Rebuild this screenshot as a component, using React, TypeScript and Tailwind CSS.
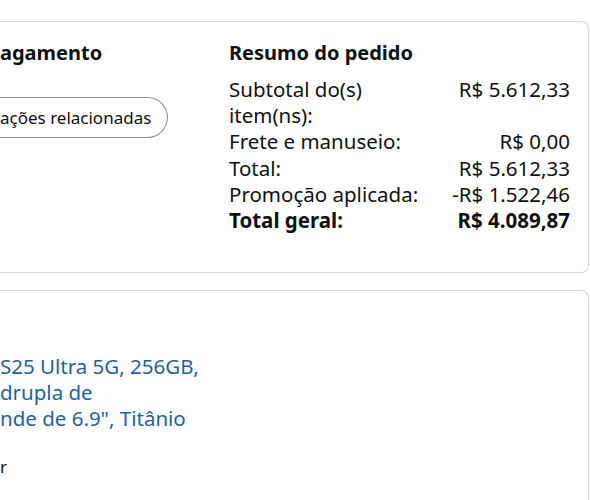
export default function App() {
  return (
    <div className="w-[590px] h-[500px] overflow-hidden bg-white font-['Noto_Sans',sans-serif] text-[#0f1111]">
      <div className="mr-[1px] pt-[21px]">
        {/* resumo / pagamento */}
        <section className="flex h-[252px] rounded-r-lg border-y border-r border-[#d5d9d9] pt-[18px]">
          <div className="w-[229px] shrink-0">
            <h2 className="text-[20px] font-bold leading-[26px]">agamento</h2>
            <button className="mt-[31px] h-[41px] rounded-r-full border-y border-r border-[#888c8c] pr-[16px] text-[17px] leading-[24px] whitespace-nowrap">
              ações relacionadas
            </button>
          </div>
          <div className="flex-1 pr-[18px]">
            <h2 className="text-[20px] font-bold leading-[26px]">
              Resumo do pedido
            </h2>
            <div className="mt-[10px] grid grid-cols-[1fr_auto] text-[20.5px] leading-[26.2px]">
              <span>
                Subtotal do(s)
                <br />
                item(ns):
              </span>
              <span className="text-right">R$ 5.612,33</span>
              <span>Frete e manuseio:</span>
              <span className="text-right">R$ 0,00</span>
              <span>Total:</span>
              <span className="text-right">R$ 5.612,33</span>
              <span>Promoção aplicada:</span>
              <span className="text-right">-R$ 1.522,46</span>
              <span className="font-bold">Total geral:</span>
              <span className="text-right font-bold">R$ 4.089,87</span>
            </div>
          </div>
        </section>

        {/* item do pedido */}
        <section className="mt-[17px] h-[300px] rounded-r-lg border-y border-r border-[#d5d9d9] pt-[62px]">
          <div className="text-[20.5px] leading-[26px] text-[#2162a1]">
            <div>S25 Ultra 5G, 256GB,</div>
            <div>drupla de</div>
            <div>nde de 6.9", Titânio</div>
          </div>
          <div className="mt-[24px] text-[17px] leading-[24px] text-[#0f1111]">
            r
          </div>
        </section>
      </div>
    </div>
  );
}
